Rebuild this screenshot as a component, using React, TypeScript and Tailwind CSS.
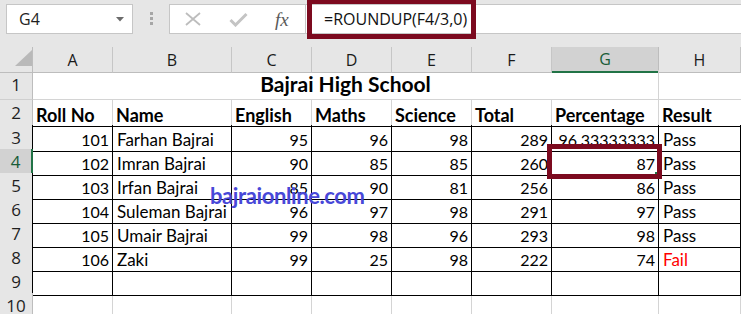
import React from 'react';

const GRID = 'grid grid-cols-[33px_80px_119px_80px_80px_80px_80px_107px_82px]';
const COLS = ['A', 'B', 'C', 'D', 'E', 'F', 'G', 'H'];

const headers = ['Roll No', 'Name', 'English', 'Maths', 'Science', 'Total', 'Percentage', 'Result'];

const rows = [
  ['101', 'Farhan Bajrai', '95', '96', '98', '289', '96.33333333', 'Pass'],
  ['102', 'Imran Bajrai', '90', '85', '85', '260', '87', 'Pass'],
  ['103', 'Irfan Bajrai', '85', '90', '81', '256', '86', 'Pass'],
  ['104', 'Suleman Bajrai', '96', '97', '98', '291', '97', 'Pass'],
  ['105', 'Umair Bajrai', '99', '98', '96', '293', '98', 'Pass'],
  ['106', 'Zaki', '99', '25', '98', '222', '74', 'Fail'],
  ['', '', '', '', '', '', '', ''],
];

function RowHead({ n, selected, edge }: { n: number; selected?: boolean; edge: 'gray' | 'black' }) {
  const right = selected
    ? 'border-r-2 border-r-[#217346] bg-[#d2d2d2] text-[#185c37]'
    : edge === 'black'
      ? 'border-r border-r-black bg-[#e6e6e6] text-[#1f1f1f]'
      : 'border-r border-r-[#bdbdbd] bg-[#e6e6e6] text-[#1f1f1f]';
  return (
    <div className={`flex items-center justify-center border-b border-b-[#cfcfcf] text-[17px] font-['Open_Sans'] ${right}`}>
      {n}
    </div>
  );
}

function FormulaBar() {
  return (
    <div className="h-[47px] bg-[#e6e6e6] flex items-start pt-[4px]">
      <div className="ml-[6px] w-[127px] h-[30px] bg-white border border-[#c6c6c6] flex items-center justify-between pl-[12px] pr-[8px] font-['Open_Sans'] text-[16px] text-[#1f1f1f]">
        <span>G4</span>
        <svg width="8" height="5" viewBox="0 0 8 5">
          <path d="M0 0 L8 0 L4 4.5 Z" fill="#6b6b6b" />
        </svg>
      </div>
      <div className="ml-[17px] mt-[8px] flex flex-col gap-[2px]">
        <span className="w-[3px] h-[3px] bg-[#a6a6a6]" />
        <span className="w-[3px] h-[3px] bg-[#a6a6a6]" />
        <span className="w-[3px] h-[3px] bg-[#a6a6a6]" />
      </div>
      <div className="ml-[16px] w-[137px] h-[30px] bg-white border border-[#c6c6c6] flex items-center">
        <svg className="ml-[15px]" width="16" height="14" viewBox="0 0 16 14">
          <path d="M1 1 L15 13 M15 1 L1 13" stroke="#bdbdbd" strokeWidth="1.8" fill="none" />
        </svg>
        <svg className="ml-[28px]" width="19" height="15" viewBox="0 0 19 15">
          <path d="M1.5 8 L6.5 13 L17.5 2" stroke="#c4c4c4" strokeWidth="3" fill="none" />
        </svg>
        <span className="ml-[27px] font-['Liberation_Serif'] italic text-[19px] leading-none text-[#5a5a5a]">fx</span>
      </div>
      <div className="flex-1 h-[30px] bg-white border-y border-[#c6c6c6] flex items-center pl-[18px] font-['Open_Sans'] text-[16px] text-[#111]">
        =ROUNDUP(F4/3,0)
      </div>
    </div>
  );
}

function ColumnHeaders() {
  return (
    <div className={`${GRID} h-[23px]`}>
      <div className="relative bg-[#e6e6e6] border-r border-r-[#bdbdbd] border-b border-b-[#bdbdbd]">
        <svg className="absolute left-[15px] top-[3px]" width="17" height="16" viewBox="0 0 17 16">
          <path d="M17 0 L17 16 L0 16 Z" fill="#b9b9b9" />
        </svg>
      </div>
      {COLS.map((c) =>
        c === 'G' ? (
          <div
            key={c}
            className="flex items-center justify-center bg-[#d2d2d2] border-r border-r-[#bdbdbd] border-b-2 border-b-[#217346] text-[#185c37] font-['Open_Sans'] text-[16px]"
          >
            {c}
          </div>
        ) : (
          <div
            key={c}
            className="flex items-center justify-center bg-[#e6e6e6] border-r border-r-[#c6c6c6] border-b border-b-[#bdbdbd] text-[#1a1a1a] font-['Open_Sans'] text-[16px]"
          >
            {c}
          </div>
        ),
      )}
    </div>
  );
}

export default function App() {
  return (
    <div className="relative w-[741px] h-[314px] overflow-hidden bg-white font-['Lato'] text-black">
      <FormulaBar />
      <ColumnHeaders />

      {/* row 1: title merged A1:G1 */}
      <div className={`${GRID} h-[30px]`}>
        <RowHead n={1} edge="gray" />
        <div className="col-span-7 flex items-end justify-center pb-[5px] border-r border-r-[#d4d4d4] border-b border-b-[#d4d4d4] text-[21px] font-bold leading-none">
          Bajrai High School
        </div>
        <div className="border-b border-b-[#d4d4d4]" />
      </div>

      {/* row 2: headings */}
      <div className={`${GRID} h-[25px]`}>
        <RowHead n={2} edge="gray" />
        {headers.map((h, i) => (
          <div
            key={h}
            className={`flex items-end pl-[3px] pb-[2px] border-b border-b-black text-[18px] font-bold leading-none ${i < 7 ? 'border-r border-r-[#d4d4d4]' : ''}`}
          >
            {h}
          </div>
        ))}
      </div>

      {/* rows 3-9 */}
      {rows.map((r, ri) => {
        const n = ri + 3;
        return (
          <div key={n} className={`${GRID} h-[24px]`}>
            <RowHead n={n} edge="black" selected={n === 4} />
            {r.map((v, ci) => {
              const left = ci === 1 || ci === 7;
              const fail = v === 'Fail';
              return (
                <div
                  key={ci}
                  className={`relative flex items-end pb-[3px] border-r border-r-black border-b border-b-black leading-none whitespace-nowrap ${
                    left ? 'justify-start pl-[4px] text-[17px]' : 'justify-end pr-[3px] text-[16px]'
                  } ${fail ? 'text-[#ff0000]' : ''}`}
                >
                  {v}
                  {n === 4 && ci === 6 && (
                    <>
                      <span className="absolute left-0 right-0 bottom-[-1px] h-[2px] bg-[#217346]" />
                      <span className="absolute right-[-2px] bottom-[-2px] w-[5px] h-[5px] bg-[#217346]" />
                    </>
                  )}
                </div>
              );
            })}
          </div>
        );
      })}

      {/* row 10 */}
      <div className={`${GRID} h-[24px]`}>
        <RowHead n={10} edge="gray" />
        {COLS.map((c) => (
          <div key={c} className="border-r border-r-[#d4d4d4]" />
        ))}
      </div>

      {/* annotations */}
      <div className="absolute left-[307px] top-[-1px] w-[169px] h-[40px] border-[5px] border-[#7c0a1f]" />
      <div className="absolute left-[547px] top-[144px] w-[115px] h-[35px] border-[5px] border-[#7c0a1f]" />
      <div className="absolute left-[210px] top-[185px] text-[22px] font-bold tracking-[-0.4px] leading-none text-[#4848d8]">
        bajraionline.com
      </div>
    </div>
  );
}
